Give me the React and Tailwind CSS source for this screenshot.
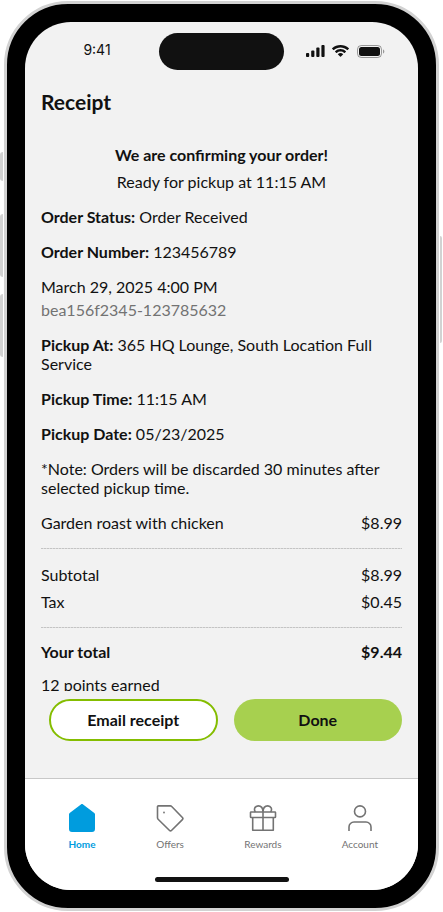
import React from 'react';

const order = {
  status: 'Order Received',
  number: '123456789',
  placedAt: 'March 29, 2025 4:00 PM',
  reference: 'bea156f2345-123785632',
  location: '365 HQ Lounge, South Location Full Service',
  pickupTime: '11:15 AM',
  pickupDate: '05/23/2025',
  items: [{ name: 'Garden roast with chicken', price: '$8.99' }],
  subtotal: '$8.99',
  tax: '$0.45',
  total: '$9.44',
  points: 12,
};

const HomeIcon = () => (
  <svg width="28" height="28" viewBox="0 0 28 28" fill="#009cde" aria-hidden="true">
    <path d="M12.9.4a1.600 1.600 0 0 1 2.200 0L26 8.700c.7.500 1 1.100 1 1.900V25a3 3 0 0 1-3 3H4a3 3 0 0 1-3-3V10.600c0-.8.3-1.400 1-1.900z" />
  </svg>
);

const OffersIcon = () => (
  <svg width="28" height="28" viewBox="0 0 28 28" fill="none" stroke="#737373" strokeWidth="1.6" strokeLinejoin="round" aria-hidden="true">
    <path d="M1.500 2.700a.8.8 0 0 1 .8-.8h12a2 2 0 0 1 1.400.6l10.700 11a1.500 1.500 0 0 1 0 2.100L15.700 26.200a1.700 1.700 0 0 1-2.400 0L2.100 15.200a2 2 0 0 1-.6-1.400z" />
    <circle cx="8" cy="8.500" r=".9" fill="#737373" stroke="none" />
  </svg>
);

const RewardsIcon = () => (
  <svg width="28" height="28" viewBox="0 0 28 28" fill="none" stroke="#737373" strokeWidth="1.6" strokeLinejoin="round" aria-hidden="true">
    <rect x="1.500" y="8" width="25" height="5.500" rx=".6" />
    <path d="M3.700 13.500v12.800h20.600V13.500M14 8v18.300" />
    <path d="M14 8C14 4.500 12.300 1.900 9.200 1.900 6 1.900 4.400 5.300 6.400 8M14 8c0-3.500 1.700-6.100 4.800-6.100 3.200 0 4.800 3.400 2.800 6.100" />
  </svg>
);

const AccountIcon = () => (
  <svg width="28" height="28" viewBox="0 0 28 28" fill="none" stroke="#737373" strokeWidth="1.6" aria-hidden="true">
    <circle cx="14" cy="7.400" r="5.500" />
    <path d="M3 27v-4a5 5 0 0 1 5-5h12a5 5 0 0 1 5 5v4" />
  </svg>
);

const tabs = [
  { label: 'Home', icon: HomeIcon, active: true },
  { label: 'Offers', icon: OffersIcon },
  { label: 'Rewards', icon: RewardsIcon },
  { label: 'Account', icon: AccountIcon },
];

const StatusBar = () => (
  <div className="grid grid-cols-[1fr_125px_1fr] items-start pt-[11px]">
    <span className="pt-[7px] pl-[10px] text-center font-['Inter',sans-serif] text-[14px] leading-5">9:41</span>
    <div className="h-[37px] rounded-full bg-[#111111]" />
    <div className="flex items-start gap-[7px] pt-3 pl-[22px]">
      <svg width="19" height="12" viewBox="0 0 19 12" fill="#111111" aria-hidden="true">
        <rect x="0" y="8" width="3.200" height="4" rx=".9" />
        <rect x="5.200" y="5.500" width="3.200" height="6.500" rx=".9" />
        <rect x="10.300" y="2.500" width="3.200" height="9.500" rx=".9" />
        <rect x="15.400" y="0" width="3.200" height="12" rx=".9" />
      </svg>
      <svg width="18" height="12" viewBox="0 0 18 12" fill="#111111" aria-hidden="true">
        <path d="M8.500 2.500c2.500 0 4.800.9 6.600 2.600.1.100.3.100.5 0l1.300-1.300c.1-.2.1-.4 0-.5C12.200-1.100 4.800-1.100.1 3.300c-.1.100-.1.300 0 .5l1.300 1.300c.2.100.4.100.5 0 1.800-1.700 4.100-2.600 6.600-2.600z" />
        <path d="M8.500 6.600c1.300 0 2.600.5 3.600 1.400.2.100.4.100.5 0l1.300-1.300c.2-.2.200-.4 0-.5-3-2.800-7.700-2.800-10.800 0-.1.100-.1.400 0 .5L4.400 8c.1.100.4.100.5 0 1-.9 2.300-1.400 3.600-1.400z" />
        <path d="M11 9.400c.2-.1.200-.4 0-.5-1.500-1.200-3.500-1.200-5 0-.2.100-.2.400 0 .5l2.300 2.300c.1.100.3.100.4 0z" />
      </svg>
      <svg width="28" height="13" viewBox="0 0 28 13" aria-hidden="true">
        <rect x=".5" y=".5" width="24" height="12" rx="3.800" fill="none" stroke="#111111" strokeOpacity=".4" />
        <rect x="2" y="2" width="21" height="9" rx="2.500" fill="#111111" />
        <path d="M26 4.500v4c.8-.3 1.300-1.100 1.300-2s-.5-1.700-1.300-2z" fill="#111111" fillOpacity=".4" />
      </svg>
    </div>
  </div>
);

const Detail = ({ label, children }) => (
  <p>
    <strong>{label}:</strong> {children}
  </p>
);

const PriceRow = ({ label, price }) => (
  <div className="flex justify-between gap-4">
    <dt>{label}</dt>
    <dd>{price}</dd>
  </div>
);

const Divider = () => (
  <hr className="h-px border-0 bg-[repeating-linear-gradient(90deg,#c4c4c4_0_2px,#dddddd_2px_3px)]" />
);

const Receipt = () => (
  <main className="min-h-0 flex-1 overflow-y-auto px-4 text-base leading-[19px] [scrollbar-width:none]">
    <h1 className="pt-5 text-[21px] leading-6 font-bold">Receipt</h1>

    <div className="mt-[31px] space-y-2 text-center">
      <p className="font-bold">We are confirming your order!</p>
      <p>Ready for pickup at {order.pickupTime}</p>
    </div>

    <div className="mt-4 space-y-4">
      <Detail label="Order Status">{order.status}</Detail>
      <Detail label="Order Number">{order.number}</Detail>
      <div className="space-y-1">
        <p>{order.placedAt}</p>
        <p className="text-[#737373]">{order.reference}</p>
      </div>
      <Detail label="Pickup At">{order.location}</Detail>
      <Detail label="Pickup Time">{order.pickupTime}</Detail>
      <Detail label="Pickup Date">{order.pickupDate}</Detail>
      <p>*Note: Orders will be discarded 30 minutes after selected pickup time.</p>
    </div>

    <dl className="py-4">
      {order.items.map((item) => (
        <PriceRow key={item.name} label={item.name} price={item.price} />
      ))}
    </dl>
    <Divider />
    <dl className="space-y-2 py-4">
      <PriceRow label="Subtotal" price={order.subtotal} />
      <PriceRow label="Tax" price={order.tax} />
    </dl>
    <Divider />
    <dl className="py-[14px] font-bold">
      <PriceRow label="Your total" price={order.total} />
    </dl>
    <p>{order.points} points earned</p>
  </main>
);

const TabBar = () => (
  <nav className="border-t border-[#c8c8c8] bg-white pt-[25px]">
    <div className="flex justify-between pr-10 pl-[43px]">
      {tabs.map(({ label, icon: Icon, active }) => (
        <a
          key={label}
          href="#"
          className={`flex flex-col items-center gap-[6px] text-[10px] leading-3 ${active ? 'font-bold text-[#009cde]' : 'text-[#737373]'}`}
        >
          <Icon />
          {label}
        </a>
      ))}
    </div>
    <div className="mx-auto mt-[27px] mb-2 h-[5px] w-[134px] rounded-full bg-[#111111]" />
  </nav>
);

const App = () => {
  return (
    <div className="flex h-screen min-h-[560px] bg-white py-px font-['Lato',sans-serif] text-[#111111]">
      {/* Volume and mute keys */}
      <div className="flex w-1 flex-col pt-[151px] pr-px">
        <div className="h-[29px] rounded-l-sm bg-[#d2d2d2]" />
        <div className="mt-[33px] h-[63px] rounded-l-sm bg-[#d2d2d2]" />
        <div className="mt-[17px] h-[63px] rounded-l-sm bg-[#d2d2d2]" />
      </div>

      <div className="flex min-w-0 flex-1 rounded-[64px] border-3 border-[#d2d2d2] bg-black p-[18px]">
        <div className="flex min-w-0 flex-1 flex-col overflow-hidden rounded-[46px] bg-[#f2f2f2]">
          <StatusBar />
          <Receipt />
          <div className="grid grid-cols-2 gap-4 pt-2 pr-4 pb-[37px] pl-6">
            <button type="button" className="h-[42px] rounded-full border-2 border-[#84bd00] bg-white text-base font-bold">
              Email receipt
            </button>
            <button type="button" className="h-[42px] rounded-full bg-[#a7d04f] text-base font-bold">
              Done
            </button>
          </div>
          <TabBar />
        </div>
      </div>

      {/* Power key */}
      <div className="w-1 pt-[235px] pr-px pl-px">
        <div className="h-[107px] rounded-r-sm bg-[#d2d2d2]" />
      </div>
    </div>
  );
};

export default App;
